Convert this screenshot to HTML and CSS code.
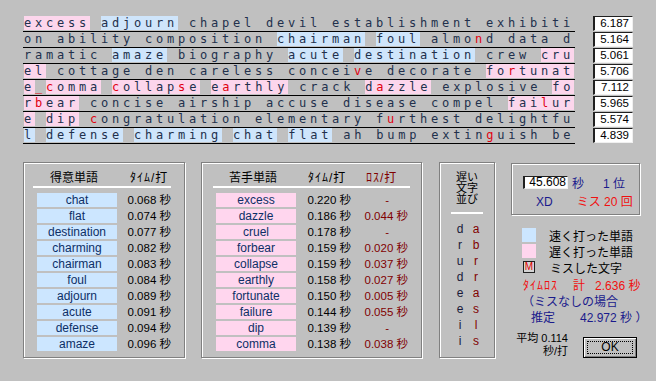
FILE: index.html
```html
<!DOCTYPE html>
<html lang="ja">
<head>
  <meta charset="UTF-8" />
  <title>結果</title>
  <link rel="stylesheet" href="styles.css">
</head>
<body>
  <div class="lines">
    <div class="ln"><p class="tx"><span class="slow">excess</span> <span class="fast">adjourn</span> chapel devil establishment exhibiti</p><span class="sc">6.187</span></div>
    <div class="ln"><p class="tx">on ability composition <span class="fast">chairman</span> <span class="fast">foul</span> almo<b class="miss">n</b>d data d</p><span class="sc">5.164</span></div>
    <div class="ln"><p class="tx">ramatic <span class="fast">amaze</span> biography <span class="fast">acute</span> <span class="fast">destination</span> crew <span class="slow">cru</span></p><span class="sc">5.061</span></div>
    <div class="ln"><p class="tx"><span class="slow">el</span> cottage den careless concei<b class="miss">v</b>e decorate <span class="slow">fo<b class="miss">r</b>tunat</span></p><span class="sc">5.706</span></div>
    <div class="ln"><p class="tx"><span class="slow">e</span><b class="miss">_</b><span class="slow"><b class="miss">c</b>omma</span> <span class="slow"><b class="miss">c</b>ollap<b class="miss">s</b>e</span> <span class="slow">e<b class="miss">a</b>rthly</span> crack <span class="slow">d<b class="miss">a</b>zzle</span> explosive <span class="slow">fo</span></p><span class="sc">7.112</span></div>
    <div class="ln"><p class="tx"><span class="slow">r<b class="miss">b</b>ear</span> concise airship accuse disease compel <span class="slow">fai<b class="miss">l</b>ur</span></p><span class="sc">5.965</span></div>
    <div class="ln"><p class="tx"><span class="slow">e</span> <span class="slow">dip</span> <b class="miss">c</b>ongratulation elementary f<b class="miss">u</b>rthest delightfu</p><span class="sc">5.574</span></div>
    <div class="ln"><p class="tx"><span class="fast">l</span> <span class="fast">defense</span> <span class="fast">charming</span> <span class="fast">chat</span> <span class="fast">flat</span> ah bump extin<b class="miss">g</b>uish be</p><span class="sc">4.839</span></div>
  </div>

  <div class="bottom">
    <div class="grp good">
      <div class="hd"><span class="c1">得意単語</span><span class="c2 hw">ﾀｲﾑ/打</span></div>
      <div class="rows">
        <div class="row"><span class="w">chat</span><span class="t">0.068 秒</span></div>
        <div class="row"><span class="w">flat</span><span class="t">0.074 秒</span></div>
        <div class="row"><span class="w">destination</span><span class="t">0.077 秒</span></div>
        <div class="row"><span class="w">charming</span><span class="t">0.082 秒</span></div>
        <div class="row"><span class="w">chairman</span><span class="t">0.083 秒</span></div>
        <div class="row"><span class="w">foul</span><span class="t">0.084 秒</span></div>
        <div class="row"><span class="w">adjourn</span><span class="t">0.089 秒</span></div>
        <div class="row"><span class="w">acute</span><span class="t">0.091 秒</span></div>
        <div class="row"><span class="w">defense</span><span class="t">0.094 秒</span></div>
        <div class="row"><span class="w">amaze</span><span class="t">0.096 秒</span></div>
      </div>
    </div>

    <div class="grp bad">
      <div class="hd"><span class="c1">苦手単語</span><span class="c2 hw">ﾀｲﾑ/打</span><span class="c3 hw">ﾛｽ/打</span></div>
      <div class="rows">
        <div class="row"><span class="w">excess</span><span class="t">0.220 秒</span><span class="l dash">-</span></div>
        <div class="row"><span class="w">dazzle</span><span class="t">0.186 秒</span><span class="l">0.044 秒</span></div>
        <div class="row"><span class="w">cruel</span><span class="t">0.178 秒</span><span class="l dash">-</span></div>
        <div class="row"><span class="w">forbear</span><span class="t">0.159 秒</span><span class="l">0.020 秒</span></div>
        <div class="row"><span class="w">collapse</span><span class="t">0.159 秒</span><span class="l">0.037 秒</span></div>
        <div class="row"><span class="w">earthly</span><span class="t">0.158 秒</span><span class="l">0.027 秒</span></div>
        <div class="row"><span class="w">fortunate</span><span class="t">0.150 秒</span><span class="l">0.005 秒</span></div>
        <div class="row"><span class="w">failure</span><span class="t">0.144 秒</span><span class="l">0.055 秒</span></div>
        <div class="row"><span class="w">dip</span><span class="t">0.139 秒</span><span class="l dash">-</span></div>
        <div class="row"><span class="w">comma</span><span class="t">0.138 秒</span><span class="l">0.038 秒</span></div>
      </div>
    </div>

    <div class="grp chars">
      <div class="hd">遅い<br>文字<br>並び</div>
      <div class="pairs">
        <span>d</span><b>a</b>
        <span>r</span><b>b</b>
        <span>u</span><b>r</b>
        <span>d</span><b>r</b>
        <span>e</span><b>a</b>
        <span>e</span><b>s</b>
        <span>i</span><b>l</b>
        <span>i</span><b>s</b>
      </div>
    </div>

    <div class="side">
      <div class="grp score">
        <div class="r1"><span class="in">45.608</span><span class="sec">秒</span><span class="rank">1 位</span></div>
        <div class="r2"><span class="name">XD</span><span class="cnt">ミス 20 回</span></div>
      </div>
      <ul class="legend">
        <li><i class="sw fast-sw"></i>速く打った単語</li>
        <li><i class="sw slow-sw"></i>遅く打った単語</li>
        <li><i class="sw mk">M</i>ミスした文字</li>
      </ul>
      <div class="loss"><span class="hw">ﾀｲﾑﾛｽ</span><span class="kei">計</span><span class="sum">2.636 秒</span></div>
      <div class="est">（ミスなしの場合</div>
      <div class="est e2"><span>推定</span><span class="val">42.972 秒 ）</span></div>
      <div class="foot">
        <div class="avg">平均 0.114<br>秒/打</div>
        <button class="ok"><span>OK</span></button>
      </div>
    </div>
  </div>
</body>
</html>
```

FILE: styles.css
```css
* { box-sizing: border-box; }
body { margin: 0; width: 656px; height: 381px; overflow: hidden; background: #c0c0c0; color: #000;
  font: 12px "Liberation Sans", "Noto Sans CJK JP", sans-serif; white-space: nowrap; }
.hw { letter-spacing: 1px; }

/* typed text */
.lines { padding: 16px 0 0 23px; }
.ln { display: flex; }
.tx { margin: 0; width: 552px; height: 16px; padding-left: 1px; border-bottom: 1px solid #000; white-space: pre;
  font: 12px/15px "DejaVu Sans Mono", monospace; letter-spacing: 3.776px; color: #22304c; }
.fast { background: #cfe5fb; }
.slow { background: #fcd6ec; }
.miss { font-weight: normal; color: #e00010; }
.sc { margin-left: 18px; width: 40px; height: 15px; padding-right: 3px; background: #fff; text-align: right;
  border-style: solid; border-width: 1px 1px 1px 2px; border-color: #202020 #f0f0f0 #f0f0f0 #202020;
  font-size: 11.5px; line-height: 13px; }

/* groups */
.bottom { display: flex; margin: 18px 0 0 23px; }
.grp { flex-shrink: 0; border: 1px solid #808080; box-shadow: inset 1px 1px 0 #fff, 1px 1px 0 #fff; height: 196px; }
.hd { display: flex; height: 18px; line-height: 16px; border-bottom: 2px solid #fff; }
.rows { padding-top: 5px; }
.row { display: flex; height: 14px; margin-bottom: 2px; line-height: 14px; }
.w { flex-shrink: 0; width: 80px; text-align: center; color: #0d2f66; }
.t, .l { flex-shrink: 0; font-size: 11.5px; text-align: right; }

.good { width: 162px; padding-top: 7px; }
.good .hd { margin: 0 13px 0 9px; }
.good .c1 { width: 97px; padding-left: 17px; }
.good .rows { padding-left: 13px; }
.good .w { background: #cce6ff; }
.good .t { width: 54px; }

.bad { width: 221px; margin-left: 16px; padding-top: 7px; }
.bad .hd { margin: 0 11px; }
.bad .c1 { width: 95px; padding-left: 16px; }
.bad .c2 { width: 58px; }
.bad .c3 { color: #800000; }
.bad .rows { padding-left: 14px; }
.bad .w { background: #ffd6ee; }
.bad .t { width: 55px; }
.bad .l { width: 57px; text-align: right; color: #800000; }
.bad .l.dash { padding-right: 19px; }

.chars { width: 56px; margin-left: 17px; padding-top: 9px; }
.chars .hd { display: block; height: 42px; font-size: 11px; line-height: 11px; margin: 0 11px; text-align: center; }
.pairs { display: grid; grid-template-columns: 16px 16px; grid-auto-rows: 16px; justify-content: center;
  margin: 7px 0 0 2px; line-height: 16px; text-align: center; }
.pairs span { color: #1a1a3a; }
.pairs b { font-weight: normal; color: #800000; }

/* right side */
.side { flex-shrink: 0; width: 129px; margin-left: 16px; }
.score { height: 52px; margin-top: 1px; padding: 12px 0 0 11px; }
.r1 { display: flex; align-items: center; height: 13px; }
.in { width: 45px; height: 13px; background: #fff; text-align: right; padding-right: 1px; line-height: 11px;
  border-style: solid; border-width: 1px 1px 1px 2px; border-color: #202020 #f0f0f0 #f0f0f0 #202020; }
.sec { margin-left: 4px; color: #1a1a8c; }
.rank { margin-left: 19px; color: #1a1a8c; }
.r2 { display: flex; height: 14px; margin-top: 6px; line-height: 14px; }
.name { margin-left: 13px; color: #1a1a8c; }
.cnt { margin-left: 24px; color: #f01010; }

.legend { list-style: none; margin: 12px 0 0 11px; padding: 0; }
.legend li { display: flex; align-items: center; height: 16px; }
.sw { flex-shrink: 0; width: 14px; height: 14px; margin-right: 13px; font-style: normal; }
.fast-sw { background: #cce6ff; }
.slow-sw { background: #ffd6ee; }
.mk { width: 12px; height: 12px; margin: 0 15px 0 1px; border: 1px solid #202020; background: #d4d4d4;
  color: #e00000; font-size: 10px; line-height: 10px; text-align: center; }

.loss { display: flex; margin: 3px 0 0 12px; height: 16px; line-height: 16px; color: #f01010; }
.kei { margin-left: 15px; }
.sum { margin-left: 10px; }
.est { margin-left: 11px; height: 16px; line-height: 16px; color: #1a1a8c; }
.e2 { display: flex; margin-left: 20px; }
.e2 .val { margin-left: 25px; }

.foot { display: flex; margin: 6px 0 0 4px; }
.avg { flex-shrink: 0; width: 53px; font-size: 11px; line-height: 12.5px; text-align: right; }
.ok { flex-shrink: 0; margin: 5px 0 0 15px; width: 54px; height: 21px; padding: 0; background: #c0c0c0; font: inherit; color: #000;
  border: 1px solid #000; box-shadow: inset 1px 1px 0 #fff, inset -1px -1px 0 #808080; }
.ok span { display: block; margin: 3px; height: 13px; line-height: 11px; border: 1px dotted #000; }
```
